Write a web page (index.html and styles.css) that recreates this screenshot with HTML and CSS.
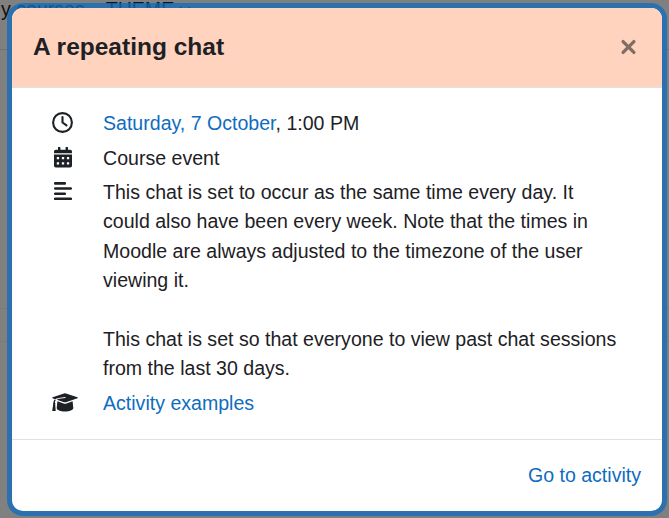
FILE: index.html
```html
<!DOCTYPE html>
<html lang="en">
<head>
    <meta charset="UTF-8">
    <meta name="viewport" content="width=device-width, initial-scale=1.0">
    <title>A repeating chat</title>
    <link rel="stylesheet" href="styles.css">
</head>
<body>
    <nav class="navbar">
        <span>y courses</span>
        <span class="theme">THEME</span>
        <svg class="caret" viewBox="0 0 12 8"><path d="M1 1l5 5 5-5"/></svg>
    </nav>
    <div class="page-row"></div>
    <div class="page-row short"></div>

    <div class="modal" role="dialog">
        <div class="modal-header">
            <h5>A repeating chat</h5>
            <button type="button" class="close" aria-label="Close">
                <svg viewBox="0 0 16 16"><path d="M2.600 2.600l10.800 10.800M13.400 2.600L2.600 13.400"/></svg>
            </button>
        </div>
        <div class="modal-body">
            <div class="row">
                <svg class="icon clock" viewBox="0 0 21 21"><circle cx="10.500" cy="10.500" r="9.400"/><path d="M10.500 5v5.500l4 2.800"/></svg>
                <div><a href="#">Saturday, 7 October</a>, 1:00 PM</div>
            </div>
            <div class="row">
                <svg class="icon calendar" viewBox="0 0 18 21"><path fill-rule="evenodd" d="M4 .8a1 1 0 0 1 2.400 0V2.700h5.200V.8a1 1 0 0 1 2.400 0V2.700h2.200a1.800 1.800 0 0 1 1.800 1.800V6.200H0V4.500a1.800 1.800 0 0 1 1.800-1.800H4zM0 7.500h18v11.200a1.800 1.800 0 0 1-1.800 1.800H1.800A1.800 1.800 0 0 1 0 18.700zM2.800 10v2.300h2.300V10zM7.850 10v2.300h2.300V10zM12.900 10v2.300h2.300V10zM2.800 15.200v2.300h2.300v-2.300zM7.850 15.200v2.300h2.300v-2.300zM12.900 15.200v2.300h2.300v-2.300z"/></svg>
                <div>Course event</div>
            </div>
            <div class="row">
                <svg class="icon lines" viewBox="0 0 18 18"><path d="M1.200 1.400h9.600M1.200 6.500h15.600M1.200 11.700h9.600M1.200 16.800h15.600"/></svg>
                <div class="description">
                    <p>This chat is set to occur as the same time every day. It could also have been every week. Note that the times in Moodle are always adjusted to the timezone of the user viewing it.</p>
                    <p>This chat is set so that everyone to view past chat sessions from the last 30 days.</p>
                </div>
            </div>
            <div class="row">
                <svg class="icon cap" viewBox="0 0 26 21">
                    <path d="M.6 5.200L12 1.500q1-.3 2 0l11.400 3.700q.9.500 0 1L14 10.200q-1 .3-2 0L4.900 7.800q1-.8 2.300-1L13.200 6.100q.5-.2.400-.6t-.6-.4L6.800 5.900Q4.500 6.200 3.200 7.200L.6 6.200q-.9-.5 0-1z"/>
                    <path d="M5.400 9.300l6.200 2.300q1.400.4 2.800 0l6.200-2.300.7 6.700c0 2-4 3.500-8.300 3.500S4.700 18 4.700 16z"/>
                    <path d="M2.600 7.500l1.200.5c-.7.900-.8 1.700-.8 2.700q.8.800.2 1.700l.5 6.100q0 .5-.5.500H.7q-.5 0-.5-.5l1-6.100q-.6-1 .3-1.700c0-1.200.3-2.300 1.100-3.200z"/>
                </svg>
                <div><a href="#">Activity examples</a></div>
            </div>
        </div>
        <div class="modal-footer">
            <a href="#">Go to activity</a>
        </div>
    </div>
</body>
</html>
```
FILE: styles.css
```css
* {
    box-sizing: border-box;
}

body {
    margin: 0;
    height: 518px;
    overflow: hidden;
    background-color: #808080;
    color: #1d2125;
    font-family: "Liberation Sans", Arial, sans-serif;
    font-size: 19.57px;
    line-height: 29.35px;
}

a {
    color: #0f6cbf;
    text-decoration: none;
}

/* page behind the dialog */
.navbar {
    display: flex;
    height: 50px;
    padding-left: 1px;
    border-bottom: 1px solid #707070;
    color: #0f1113;
    line-height: 19px;
}

.theme {
    margin-left: 21px;
}

.caret {
    width: 12px;
    height: 8px;
    margin: 6px 0 0 5px;
    fill: none;
    stroke: #0f1113;
    stroke-width: 1.5;
}

.page-row {
    height: 259px;
    border-bottom: 1px dotted #747474;
}

.page-row.short {
    height: 33px;
}

/* dialog */
.modal {
    position: absolute;
    top: 8px;
    left: 12px;
    width: 650px;
    height: 503px;
    display: flex;
    flex-direction: column;
    overflow: hidden;
    background-color: #fff;
    border-radius: 11px;
    box-shadow: 0 0 0 5px rgba(15, 108, 191, 0.75);
}

.modal-header {
    display: flex;
    justify-content: space-between;
    align-items: center;
    height: 80px;
    padding: 0 25px 2px 21px;
    background-color: #ffd3bd;
    border-bottom: 1px solid #dee2e6;
}

.modal-header h5 {
    margin: 0;
    font-size: 24.5px;
    line-height: 30px;
}

.close {
    width: 17px;
    height: 16px;
    padding: 0;
    border: none;
    background: none;
}

.close svg {
    display: block;
    width: 17px;
    height: 16px;
    fill: none;
    stroke: #806d65;
    stroke-width: 3.3;
    stroke-linecap: round;
}

.modal-body {
    flex: 1;
    padding: 21px 40px 0;
}

.row {
    display: grid;
    grid-template-columns: 51px 1fr;
    margin-bottom: 5.2px;
}

.description p {
    margin: 0 0 29.35px;
}

.description p:last-child {
    margin: 0;
}

.icon {
    fill: #1d2125;
}

.clock {
    width: 21px;
    height: 21px;
    margin-top: 3px;
    fill: none;
    stroke: #1d2125;
    stroke-width: 2.1;
    stroke-linecap: round;
    stroke-linejoin: round;
}

.calendar {
    width: 18px;
    height: 21px;
    margin: 3px 0 0 2px;
}

.lines {
    width: 18px;
    height: 18px;
    margin: 4px 0 0 2px;
    fill: none;
    stroke: #1d2125;
    stroke-width: 2.6;
    stroke-linecap: round;
}

.cap {
    width: 26px;
    height: 21px;
    margin-top: 3px;
}

.modal-footer {
    display: flex;
    justify-content: flex-end;
    align-items: center;
    height: 72px;
    padding-right: 21px;
    border-top: 1px solid #dee2e6;
}
```
